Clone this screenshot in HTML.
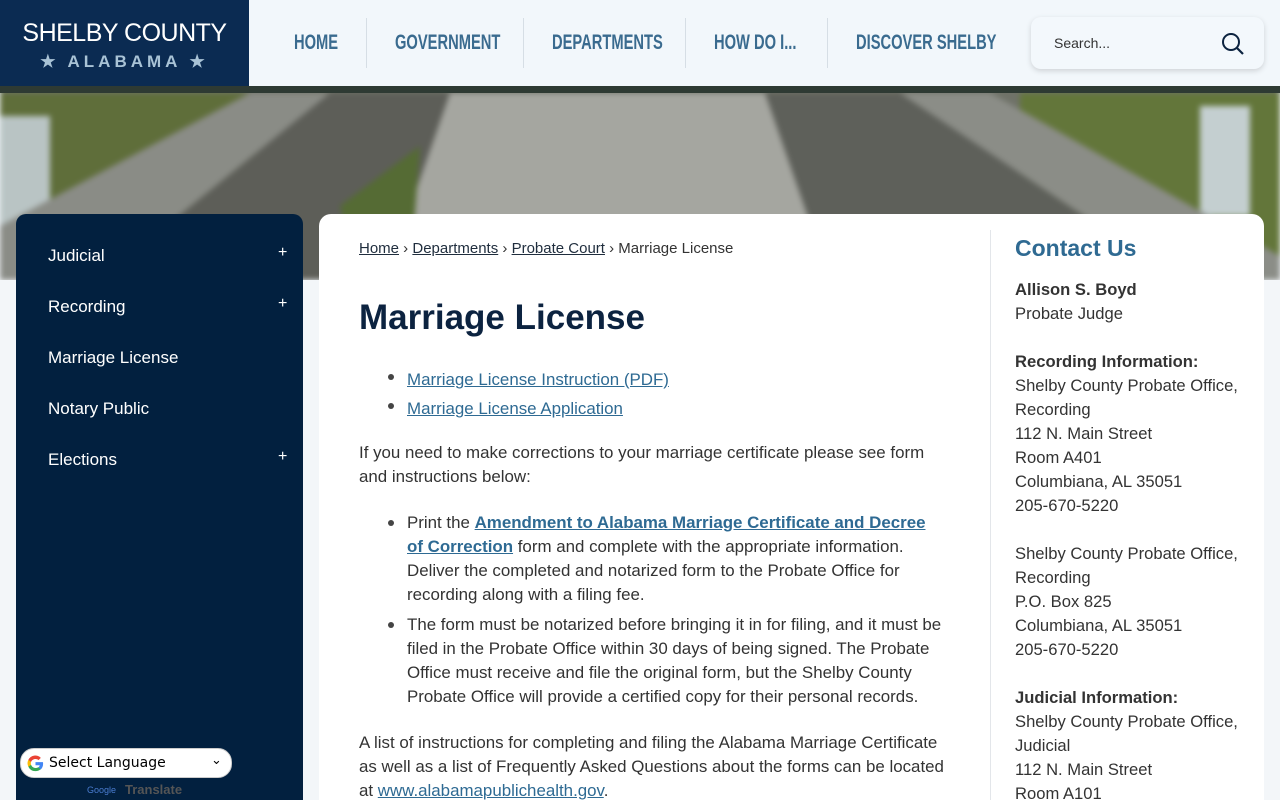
<!DOCTYPE html>
<html><head><meta charset="utf-8"><style>
*{margin:0;padding:0;box-sizing:border-box}
html,body{width:1280px;height:800px;overflow:hidden}
body{background:#f3f6f9;font-family:"Liberation Sans",sans-serif;position:relative;color:#333}
.hdr{position:absolute;left:0;top:0;width:1280px;height:86px;background:#f2f7fb}
.logo{position:absolute;left:0;top:0;width:249px;height:86px;background:#0b2b52;color:#fff;text-align:center}
.logo .a{position:absolute;left:0;width:249px;top:19px;font-size:25px;letter-spacing:-.5px}
.logo .b{position:absolute;left:0;width:249px;top:52px;font-size:17px;letter-spacing:4px;color:#a9c3d6;font-weight:bold}
.nav{position:absolute;top:18px;height:50px;display:flex;align-items:center;font-weight:bold;color:#3a6b8f;font-size:21px}
.nav span{display:inline-block;transform:scaleX(.7);transform-origin:left center;white-space:nowrap}
.sep{position:absolute;top:18px;width:1px;height:50px;background:#d6dee5}
.search{position:absolute;left:1031px;top:17px;width:233px;height:52px;background:#f3f8fc;border-radius:10px;box-shadow:0 2px 6px rgba(0,0,0,.15)}
.search .t{position:absolute;left:23px;top:18px;font-size:14px;color:#333}
.hero{position:absolute;left:0;top:86px;width:1280px;height:194px;overflow:hidden}
.side{position:absolute;left:16px;top:214px;width:287px;height:600px;background:#02203f;border-radius:10px 10px 0 0}
.side div{position:absolute;left:32px;color:#fff;font-size:17px}
.side i{position:absolute;left:262px;color:#fff;font-style:normal;font-size:16px}
.card{position:absolute;left:319px;top:214px;width:945px;height:600px;background:#fff;border-radius:12px 12px 0 0}
.bc{position:absolute;left:40px;top:26px;font-size:15px;color:#333;white-space:nowrap}
.bc u{color:#1f2d3d}
h1{position:absolute;left:40px;top:84px;font-size:35px;color:#0c2340;font-weight:bold;white-space:nowrap}
.tx{position:absolute;font-size:16.9px;line-height:24px;white-space:nowrap;color:#333}
a{color:#2e6a93;text-decoration:underline}
.dot{position:absolute;width:6px;height:6px;border-radius:3px;background:#444}
.vl{position:absolute;left:671px;top:16px;width:1px;height:600px;background:#e3e6ea}
.cu{position:absolute;left:696px;top:21px;font-size:23px;font-weight:bold;color:#2f6a92}
.ct{position:absolute;left:696px;top:64px;font-size:16.6px;line-height:24px;white-space:nowrap;color:#333}
.gt{position:absolute;left:20px;top:748px;width:212px;height:30px;background:#fff;border-radius:14px;border:1px solid #ccc}
.gt span{position:absolute;left:28px;top:6px;font-size:14px;color:#000;font-family:"DejaVu Sans",sans-serif}
</style></head><body>
<div class="hdr"></div>
<div class="logo"><div class="a">SHELBY COUNTY</div><div class="b">★ ALABAMA ★</div></div>
<div class="nav" style="left:294px"><span>HOME</span></div>
<div class="sep" style="left:366px"></div>
<div class="nav" style="left:395px"><span>GOVERNMENT</span></div>
<div class="sep" style="left:523px"></div>
<div class="nav" style="left:552px"><span>DEPARTMENTS</span></div>
<div class="sep" style="left:685px"></div>
<div class="nav" style="left:714px"><span>HOW DO I...</span></div>
<div class="sep" style="left:827px"></div>
<div class="nav" style="left:856px"><span>DISCOVER SHELBY</span></div>
<div class="search"><div class="t">Search...</div>
<svg style="position:absolute;left:190px;top:15px" width="24" height="24" viewBox="0 0 24 24"><circle cx="10" cy="10" r="8" fill="none" stroke="#0c2340" stroke-width="2"/><path d="M16 16l6 6" stroke="#0c2340" stroke-width="2.2"/></svg></div>
<div class="hero"><svg width="1280" height="194" viewBox="0 0 1280 194" style="filter:blur(3px)">
<rect width="1280" height="194" fill="#6f7268"/>
<rect x="0" y="7" width="260" height="187" fill="#5f6e3a"/>
<rect x="0" y="30" width="50" height="140" fill="#b9c4c4"/>
<rect x="1020" y="7" width="260" height="187" fill="#63763a"/>
<rect x="1200" y="20" width="50" height="110" fill="#c4cfd0"/>
<polygon points="250,7 330,7 100,194 0,194 0,140" fill="#8a8c86"/>
<polygon points="330,7 450,7 385,194 100,194" fill="#5d5e58"/>
<polygon points="450,7 765,7 830,194 385,194" fill="#a5a6a0"/>
<polygon points="765,7 900,7 1180,194 830,194" fill="#5e605a"/>
<polygon points="900,7 990,7 1280,170 1280,194 1180,194" fill="#8b8d87"/>
<polygon points="340,120 420,60 410,194 360,194" fill="#556b34"/>
</svg><div style="position:absolute;left:0;top:0;width:1280px;height:7px;background:#2e3a33"></div></div>
<div class="side">
<div style="top:32px">Judicial</div><i style="top:30px">+</i>
<div style="top:83px">Recording</div><i style="top:81px">+</i>
<div style="top:134px">Marriage License</div>
<div style="top:185px">Notary Public</div>
<div style="top:236px">Elections</div><i style="top:234px">+</i>
</div>
<div class="card">
<div class="bc"><u>Home</u> › <u>Departments</u> › <u>Probate Court</u> › Marriage License</div>
<h1>Marriage License</h1>
<div class="dot" style="left:69px;top:160px"></div><div class="dot" style="left:69px;top:189px"></div>
<div class="tx" style="left:88px;top:151px;line-height:29px"><a>Marriage License Instruction (PDF)</a><br><a>Marriage License Application</a></div>
<div class="tx" style="left:40px;top:227px">If you need to make corrections to your marriage certificate please see form<br>and instructions below:</div>
<div class="dot" style="left:69px;top:306px"></div><div class="dot" style="left:69px;top:408px"></div>
<div class="tx" style="left:88px;top:297px">Print the <a style="font-weight:bold">Amendment to Alabama Marriage Certificate and Decree</a><br><a style="font-weight:bold">of Correction</a> form and complete with the appropriate information.<br>Deliver the completed and notarized form to the Probate Office for<br>recording along with a filing fee.</div>
<div class="tx" style="left:88px;top:399px">The form must be notarized before bringing it in for filing, and it must be<br>filed in the Probate Office within 30 days of being signed. The Probate<br>Office must receive and file the original form, but the Shelby County<br>Probate Office will provide a certified copy for their personal records.</div>
<div class="tx" style="left:40px;top:517px">A list of instructions for completing and filing the Alabama Marriage Certificate<br>as well as a list of Frequently Asked Questions about the forms can be located<br>at <a>www.alabamapublichealth.gov</a>.</div>
<div class="vl"></div>
<div class="cu">Contact Us</div>
<div class="ct"><b>Allison S. Boyd</b><br>Probate Judge<br><br><b>Recording Information:</b><br>Shelby County Probate Office,<br>Recording<br>112 N. Main Street<br>Room A401<br>Columbiana, AL 35051<br>205-670-5220<br><br>Shelby County Probate Office,<br>Recording<br>P.O. Box 825<br>Columbiana, AL 35051<br>205-670-5220<br><br><b>Judicial Information:</b><br>Shelby County Probate Office,<br>Judicial<br>112 N. Main Street<br>Room A101</div>
</div>
<div class="gt"><svg style="position:absolute;left:5px;top:5px" width="19" height="19" viewBox="0 0 20 20"><path d="M18 10.2c0-.6-.1-1.2-.2-1.7H10v3.3h4.5a4 4 0 0 1-1.7 2.5v2h2.7c1.6-1.5 2.5-3.6 2.5-6.1z" fill="#4285f4"/><path d="M10 18c2.3 0 4.1-.8 5.5-2.1l-2.7-2c-.7.5-1.700.8-2.800.8-2.200 0-4-1.500-4.700-3.400H2.500v2.100A8 8 0 0 0 10 18z" fill="#34a853"/><path d="M5.3 11.3a4.8 4.8 0 0 1 0-3V6.2H2.5a8 8 0 0 0 0 7.2z" fill="#fbbc05"/><path d="M10 5.2c1.2 0 2.3.4 3.2 1.3l2.4-2.4A8 8 0 0 0 2.5 6.2l2.8 2.1C6 6.6 7.8 5.2 10 5.2z" fill="#ea4335"/></svg><span>Select Language</span><span style="left:190px;top:4px;font-size:13px">⌄</span></div>
<div style="position:absolute;left:87px;top:785px;font-size:9px;color:#4a7cd0">Google</div>
<div style="position:absolute;left:125px;top:782px;font-size:13px;color:#555;font-weight:bold">Translate</div>
</body></html>
